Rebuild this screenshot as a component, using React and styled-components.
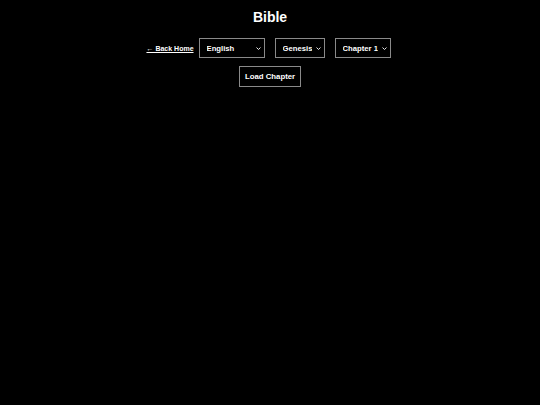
import React, { useState } from 'react'
import styled, { createGlobalStyle } from 'styled-components'

const GlobalStyle = createGlobalStyle`
  html, body {
    margin: 0;
    padding: 0;
    background: #000;
    color: #fff;
    font-family: 'Liberation Sans', Arial, sans-serif;
  }
`

const languages = ['English', 'Español', 'Français']
const books = ['Genesis', 'Exodus', 'Leviticus']
const chapters = [1, 2, 3, 4, 5]

const Dropdown = ({ width, value, onChange, children }) => (
  <SelectWrap>
    <Select width={width} value={value} onChange={onChange}>
      {children}
    </Select>
    <Chevron width="5" height="3" viewBox="0 0 5 3">
      <path d="M0.5 0.5 L2.5 2.5 L4.5 0.5" fill="none" stroke="#fff" strokeWidth="0.9" />
    </Chevron>
  </SelectWrap>
)

const Bible = () => {
  const [language, setLanguage] = useState('English')
  const [book, setBook] = useState('Genesis')
  const [chapter, setChapter] = useState(1)

  return (
    <Page>
      <GlobalStyle />
      <Title>Bible</Title>
      <Controls>
        <BackLink href="#">← Back Home</BackLink>
        <Dropdown width={66} value={language} onChange={(e) => setLanguage(e.target.value)}>
          {languages.map((l) => (
            <option key={l}>{l}</option>
          ))}
        </Dropdown>
        <Dropdown width={50} value={book} onChange={(e) => setBook(e.target.value)}>
          {books.map((b) => (
            <option key={b}>{b}</option>
          ))}
        </Dropdown>
        <Dropdown width={56} value={chapter} onChange={(e) => setChapter(e.target.value)}>
          {chapters.map((c) => (
            <option key={c} value={c}>
              Chapter {c}
            </option>
          ))}
        </Dropdown>
      </Controls>
      <LoadButton type="button">Load Chapter</LoadButton>
    </Page>
  )
}

const Page = styled.div`
  display: flex;
  flex-direction: column;
  align-items: center;
  min-height: 405px;
  padding-top: 9px;
  box-sizing: border-box;
`
const Title = styled.h1`
  margin: 0 0 13px;
  font-size: 14px;
  font-weight: bold;
  line-height: 16px;
`
const Controls = styled.div`
  display: flex;
  align-items: center;
  height: 20px;
  padding-left: 2px;
`
const BackLink = styled.a`
  color: #fff;
  font-size: 7px;
  font-weight: bold;
  text-decoration: underline;
`
const SelectWrap = styled.div`
  position: relative;
  margin: 0 5px;
  display: flex;
`
const Select = styled.select`
  appearance: none;
  width: ${(p) => p.width}px;
  height: 20px;
  box-sizing: border-box;
  margin: 0;
  padding: 0 12px 0 7px;
  background: #000;
  color: #fff;
  border: 1px solid #8a8a8a;
  border-radius: 0;
  font-family: 'Liberation Sans', Arial, sans-serif;
  font-size: 7.7px;
  font-weight: bold;
  outline: none;
`
const Chevron = styled.svg`
  position: absolute;
  right: 4px;
  top: 9px;
  pointer-events: none;
`
const LoadButton = styled.button`
  margin-top: 8px;
  height: 21px;
  box-sizing: border-box;
  padding: 0 5px;
  background: #000;
  color: #fff;
  border: 1px solid #8a8a8a;
  border-radius: 0;
  font-family: 'Liberation Sans', Arial, sans-serif;
  font-size: 7.8px;
  font-weight: bold;
  cursor: pointer;
`

export default Bible
